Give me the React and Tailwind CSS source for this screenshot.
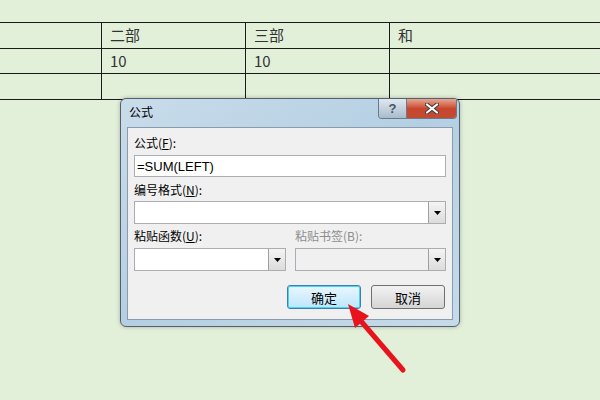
import React from "react";

const cjk = { fontFamily: '"Noto Sans CJK SC", "Liberation Sans", sans-serif' };

function DropArrow() {
  return (
    <div className="w-[17px] h-full border-l border-[#a0a0a0] bg-gradient-to-b from-[#f4f4f4] to-[#dcdcdc] flex items-center justify-center">
      <svg width="7" height="4" viewBox="0 0 7 4"><path d="M0 0h7L3.5 4z" fill="#000" /></svg>
    </div>
  );
}

function Select({ className, disabled }) {
  return (
    <div className={`h-[23px] border border-[#abadb3] flex ${disabled ? "bg-[#f0f0f0]" : "bg-white"} ${className}`}>
      <div className="flex-1" />
      <DropArrow />
    </div>
  );
}

export default function App() {
  const cell = "border-r border-b border-[#1a1a1a] pl-[8px] flex items-center text-[15px] text-[#333]";
  return (
    <div className="relative w-[600px] h-[400px] overflow-hidden bg-[#e2efd9]" style={cjk}>
      <div className="pt-[22px]">
        <div className="grid grid-cols-[102px_144px_144px_1fr] border-t border-[#1a1a1a] w-[640px]">
          <div className={`${cell} h-[26px]`}></div>
          <div className={`${cell} h-[26px]`}>二部</div>
          <div className={`${cell} h-[26px]`}>三部</div>
          <div className={`${cell} h-[26px] border-r-0`}>和</div>
          <div className={`${cell} h-[25px]`}></div>
          <div className={`${cell} h-[25px]`}>10</div>
          <div className={`${cell} h-[25px]`}>10</div>
          <div className={`${cell} h-[25px] border-r-0`}></div>
          <div className={`${cell} h-[26px]`}></div>
          <div className={`${cell} h-[26px]`}></div>
          <div className={`${cell} h-[26px]`}></div>
          <div className={`${cell} h-[26px] border-r-0`}></div>
        </div>
      </div>

      {/* dialog */}
      <div className="absolute left-[120px] top-[98px] w-[340px] h-[229px] rounded-[6px] border border-[#55606e] bg-gradient-to-br from-[#c9dcea] via-[#b4cfe3] to-[#c6dbea] shadow-[0_0_4px_rgba(0,0,0,0.25)] flex flex-col">
        <div className="h-[28px] flex items-start relative">
          <span className="ml-[8px] mt-[7px] text-[12px] text-black leading-none">公式</span>
          <div className="absolute left-[257px] top-0 flex h-[20px] rounded-b-[4px] border border-t-0 border-[#6b7a8a] overflow-hidden">
            <div className="w-[27px] bg-gradient-to-b from-[#dfe8f0] to-[#a9bccd] flex items-center justify-center text-[13px] font-bold text-[#4a5560]" style={{ fontFamily: '"Liberation Sans", sans-serif' }}>?</div>
            <div className="w-[50px] border-l border-[#6b7a8a] bg-gradient-to-b from-[#e6a593] via-[#c8472c] to-[#c34a33] flex items-center justify-center">
              <svg width="14" height="11" viewBox="0 0 14 11">
                <path d="M2 1.5L12 9.5M12 1.5L2 9.5" stroke="#3c3c3c" strokeWidth="4" strokeLinecap="round" />
                <path d="M2 1.5L12 9.5M12 1.5L2 9.5" stroke="#fff" strokeWidth="2.2" strokeLinecap="round" />
              </svg>
            </div>
          </div>
        </div>
        <div className="mx-[6px] mb-[6px] flex-1 border border-[#8a9bab] bg-[#f0f0f0] px-[6px] pt-[9px] text-[12px] text-black leading-none">
          <div className="h-[14px]">公式(<span className="underline">F</span>):</div>
          <div className="mt-[4px] h-[22px] border border-[#abadb3] bg-white flex items-center pl-[2px] text-[13px]" style={{ fontFamily: '"Liberation Sans", sans-serif' }}>=SUM(LEFT)</div>
          <div className="mt-[7px] h-[14px]">编号格式(<span className="underline">N</span>):</div>
          <Select className="mt-[3px]" />
          <div className="mt-[6px] flex gap-[9px]">
            <div className="w-[152px]">
              <div className="h-[14px]">粘贴函数(<span className="underline">U</span>):</div>
              <Select className="mt-[4px]" />
            </div>
            <div className="flex-1">
              <div className="h-[14px] text-[#8d8d8d]">粘贴书签(B):</div>
              <Select className="mt-[4px]" disabled />
            </div>
          </div>
          <div className="mt-[14px] flex justify-end gap-[10px]">
            <div className="w-[74px] h-[24px] rounded-[3px] border border-[#3c7fb1] shadow-[inset_0_0_0_1px_#48d4f9] bg-gradient-to-b from-[#eaf6fd] to-[#bee6fd] flex items-center justify-center text-[13px]">确定</div>
            <div className="w-[74px] h-[24px] rounded-[3px] border border-[#707070] bg-gradient-to-b from-[#f2f2f2] to-[#d5d5d5] flex items-center justify-center text-[13px] mr-[1px]">取消</div>
          </div>
        </div>
      </div>

      {/* arrow */}
      <svg className="absolute left-0 top-0" width="600" height="400" viewBox="0 0 600 400">
        <path d="M403 370L360 320" stroke="#e8141b" strokeWidth="5" strokeLinecap="round" />
        <path d="M348 304L369 316L355 328z" fill="#e8141b" />
      </svg>
    </div>
  );
}
